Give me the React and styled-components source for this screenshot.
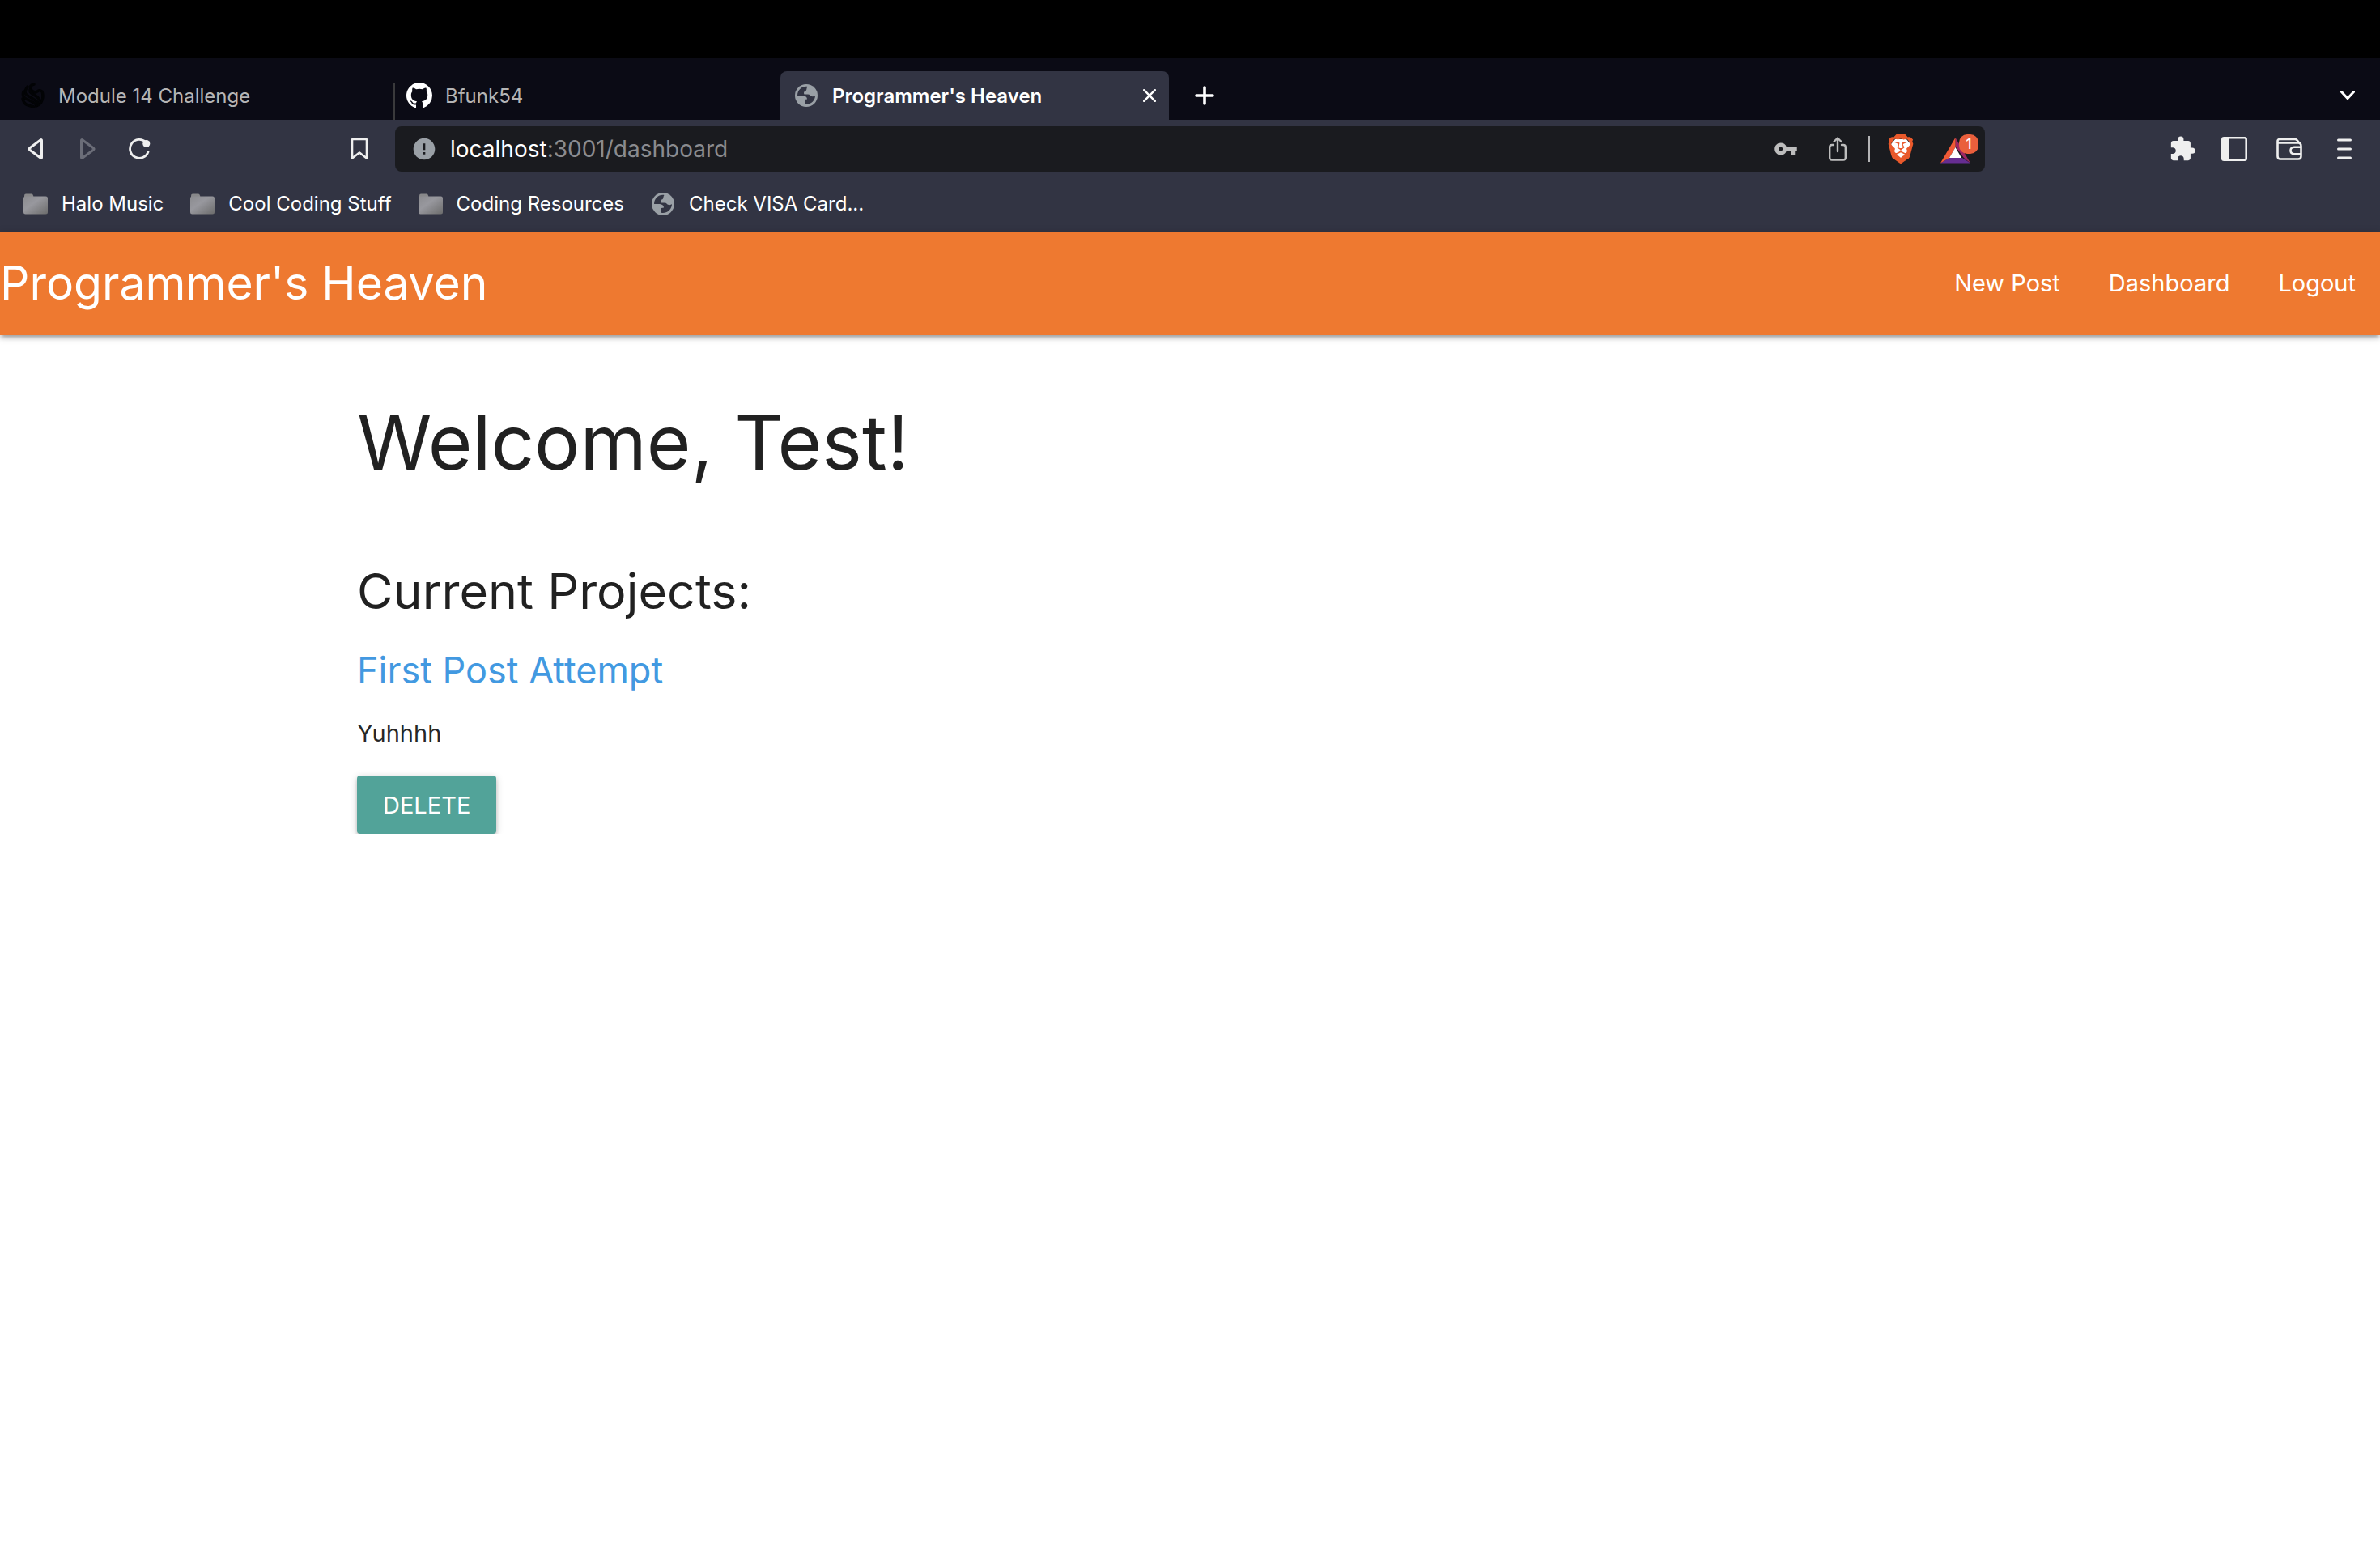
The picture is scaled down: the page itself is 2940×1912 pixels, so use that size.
import React from "react";
import styled, { createGlobalStyle } from "styled-components";
import { MdVpnKey, MdExtension, MdError } from "react-icons/md";
import { SiBrave } from "react-icons/si";

const Global = createGlobalStyle`
  * { box-sizing: border-box; }
  body {
    margin: 0;
    background: #fff;
    color: rgba(0, 0, 0, 0.87);
    font-family: Inter, Roboto, "Liberation Sans", sans-serif;
  }
  button, input { font: inherit; }
  svg { display: block; flex: none; }
`;

const ScreenEdge = styled.div`
  height: 72px;
  background: #000;
`;

const TabStrip = styled.div`
  display: flex;
  align-items: flex-end;
  height: 76px;
  padding: 0 8px;
  background: #0b0b15;
`;

const Tab = styled.div`
  display: flex;
  align-items: center;
  gap: 16px;
  width: ${(p) => (p.$active ? 480 : 478)}px;
  height: ${(p) => (p.$active ? 60 : 46)}px;
  padding: 0 ${(p) => (p.$active ? 8 : 16)}px 0 ${(p) => (p.$divided ? 14 : 16)}px;
  border-left: ${(p) => (p.$divided ? "2px solid #3a3a3c" : "none")};
  border-radius: ${(p) => (p.$active ? "8px 8px 0 0" : "0")};
  background: ${(p) => (p.$active ? "#323443" : "transparent")};
`;

const TabBody = styled.button`
  display: flex;
  align-items: center;
  gap: 16px;
  flex: 1;
  height: ${(p) => (p.$active ? 60 : 46)}px;
  padding: 0 0 ${(p) => (p.$active ? 0 : 14)}px;
  border: 0;
  background: none;
  color: ${(p) => (p.$active ? "#fff" : "#b5b5b5")};
  font-size: 24px;
  font-weight: ${(p) => (p.$active ? 600 : 400)};
  white-space: nowrap;
`;

const IconSlot = styled.span`
  display: flex;
  align-items: center;
  justify-content: center;
  width: 32px;
  height: 32px;
`;

const IconButton = styled.button`
  display: flex;
  align-items: center;
  justify-content: ${(p) => p.$align || "center"};
  width: ${(p) => p.$width || 64}px;
  height: ${(p) => (p.$tall ? 60 : 56)}px;
  padding: 0;
  border: 0;
  background: none;
  color: ${(p) => p.$color || "#efefef"};
`;

const Spacer = styled.div`
  flex: 1;
`;

const Toolbar = styled.div`
  display: grid;
  grid-template-columns: 488px 1fr 488px;
  align-items: center;
  height: 72px;
  background: #323443;
`;

const ToolGroup = styled.div`
  display: flex;
  align-items: center;
  justify-content: ${(p) => (p.$end ? "flex-end" : "flex-start")};
  padding: 0 12px;
`;

const AddressBar = styled.div`
  display: flex;
  align-items: center;
  height: 56px;
  padding: 0 8px 0 16px;
  border-radius: 8px;
  background: #1a1b1f;
`;

const Address = styled.a`
  flex: 1;
  padding-left: 12px;
  color: #8a8b8f;
  font-size: 28px;
  line-height: 36px;
  text-decoration: none;
`;

const Host = styled.span`
  color: #fff;
`;

const Rule = styled.span`
  width: 2px;
  height: 32px;
  margin: 0 6px;
  background: #b4b4b6;
`;

const Bookmarks = styled.nav`
  display: flex;
  align-items: center;
  gap: 32px;
  height: 66px;
  padding: 0 28px 2px;
  background: #323443;
`;

const Bookmark = styled.a`
  display: flex;
  align-items: center;
  gap: 16px;
  color: #fff;
  font-size: 24px;
  line-height: 32px;
  text-decoration: none;
  white-space: nowrap;
`;

const Navbar = styled.header`
  position: relative;
  display: flex;
  align-items: center;
  justify-content: space-between;
  height: 128px;
  background: #ee7930;
  box-shadow: 0 4px 4px rgba(0, 0, 0, 0.14), 0 6px 2px -4px rgba(0, 0, 0, 0.12),
    0 2px 10px rgba(0, 0, 0, 0.2);
`;

const Brand = styled.a`
  color: #fff;
  font-size: 57px;
  line-height: 128px;
  text-decoration: none;
`;

const NavLinks = styled.nav`
  display: flex;
`;

const NavLink = styled.a`
  padding: 0 30px;
  color: #fff;
  font-size: 29px;
  line-height: 128px;
  text-decoration: none;
`;

const Content = styled.main`
  width: 70%;
  margin: 0 auto;
  padding-top: 72px;
`;

const Welcome = styled.h1`
  margin: 0;
  font-size: 94px;
  font-weight: 400;
  line-height: 120px;
`;

const Section = styled.h2`
  margin: 86px 0 0;
  font-size: 61px;
  font-weight: 400;
  line-height: 76px;
`;

const PostTitle = styled.h3`
  margin: 32px 0 0;
  font-size: 45px;
  font-weight: 400;
  line-height: 56px;
`;

const PostLink = styled.a`
  color: #4299e1;
  text-decoration: none;
`;

const PostText = styled.p`
  margin: 28px 0 0;
  font-size: 29px;
  line-height: 44px;
`;

const DeleteButton = styled.button`
  display: block;
  height: 72px;
  margin-top: 30px;
  padding: 0 32px;
  border: 0;
  border-radius: 4px;
  background: #52a399;
  color: #fff;
  font-size: 29px;
  text-transform: uppercase;
  box-shadow: 0 4px 4px rgba(0, 0, 0, 0.14), 0 6px 2px -4px rgba(0, 0, 0, 0.12),
    0 2px 10px rgba(0, 0, 0, 0.2);
`;

const PhoenixIcon = () => (
  <svg width="30" height="32" viewBox="0 0 30 32" fill="none" stroke="#020305" strokeWidth="3.4" strokeLinecap="round">
    <path d="M17 2C8 4 14 11 18 12C23 12 22 7 27 11C29 17 28 26 20 29" />
    <path d="M9 5C0 17 14 16 22 25" />
    <path d="M4 11C0 22 14 20 20 28" />
    <path d="M3 20C5 29 11 28 17 30" />
    <path d="M12 9C11 15 22 15 24 22" />
  </svg>
);

const GithubIcon = () => (
  <svg width="32" height="32" viewBox="0 0 16 16" fill="#fff">
    <path d="M8 0C3.58 0 0 3.58 0 8c0 3.54 2.29 6.53 5.47 7.59.4.07.55-.17.55-.38 0-.19-.01-.82-.01-1.49-2.01.37-2.53-.49-2.69-.94-.09-.23-.48-.94-.82-1.13-.28-.15-.68-.52-.01-.53.63-.01 1.08.58 1.23.82.72 1.21 1.87.87 2.33.66.07-.52.28-.87.51-1.07-1.78-.2-3.64-.89-3.64-3.95 0-.87.31-1.59.82-2.15-.08-.2-.36-1.02.08-2.12 0 0 .67-.21 2.2.82.64-.18 1.32-.27 2-.27.68 0 1.36.09 2 .27 1.53-1.04 2.2-.82 2.2-.82.44 1.1.16 1.92.08 2.12.51.56.82 1.27.82 2.15 0 3.07-1.87 3.75-3.65 3.95.29.25.54.73.54 1.48 0 1.07-.01 1.93-.01 2.2 0 .21.15.46.55.38A8.013 8.013 0 0016 8c0-4.42-3.58-8-8-8z" />
  </svg>
);

const GlobeIcon = () => (
  <svg width="28" height="28" viewBox="0 0 28 28">
    <circle cx="14" cy="14" r="14" fill="#9aa0a6" />
    <path
      fill="#323443"
      d="M15.500 3C9 2 3 7 3 14L10 14C13 14.200 15 16 15 18.500L12 19V24.800C19 26 25 20.500 25 14C24 15 22.500 15.500 21 15C18.500 14.500 18.500 12.500 16 12.500H11.500C10.500 11 11 9 12.500 8.500C15 8.200 14 4.500 15.500 3Z"
    />
  </svg>
);

const FolderIcon = () => (
  <svg width="30" height="26" viewBox="0 0 30 26">
    <defs>
      <linearGradient id="folder" x1="0" y1="0" x2="1" y2="1">
        <stop offset="0" stopColor="#8b8b8f" />
        <stop offset="0.4" stopColor="#98989e" />
        <stop offset="1" stopColor="#6c6c6c" />
      </linearGradient>
    </defs>
    <path d="M1 5V2.5Q1 .5 3 .5H10Q11.500 .5 12 2.500L12.500 5Z" fill="#88888a" />
    <rect y="3.500" width="30" height="22" rx="2.500" fill="url(#folder)" />
  </svg>
);

const TriangleIcon = ({ forward }) => (
  <svg width="20" height="28" viewBox="0 0 20 28" fill="none" stroke={forward ? "#6b6d78" : "#efefef"} strokeWidth="3" strokeLinejoin="round">
    <path d={forward ? "M2.500 3.500V24.500Q2.500 26 4 25L17.500 15Q18.500 14 17.500 13L4 3Q2.500 2 2.500 3.500Z" : "M17.500 3.500V24.500Q17.500 26 16 25L2.500 15Q1.500 14 2.500 13L16 3Q17.500 2 17.500 3.500Z"} />
  </svg>
);

const ReloadIcon = () => (
  <svg width="28" height="28" viewBox="0 0 28 28" fill="none" stroke="#efefef" strokeWidth="2.800" strokeLinecap="round">
    <path d="M22 5.500A11.500 11.500 0 1 0 25 17.500" />
    <circle cx="22.800" cy="7.500" r="4.500" fill="#efefef" stroke="none" />
  </svg>
);

const BookmarkIcon = () => (
  <svg width="22" height="28" viewBox="0 0 22 28" fill="none" stroke="#efefef" strokeWidth="2.600" strokeLinejoin="round">
    <path d="M2 2.500Q2 2 2.500 2H19.500Q20 2 20 2.500V25.500L11 18.500L2 25.500Z" />
  </svg>
);

const ShareIcon = () => (
  <svg width="22" height="30" viewBox="0 0 22 30" fill="none" stroke="#bdbdbd" strokeWidth="2.400" strokeLinecap="round" strokeLinejoin="round">
    <path d="M6 10H4Q1.200 10 1.200 13V26Q1.200 28.500 4 28.500H18Q20.800 28.500 20.800 26V13Q20.800 10 18 10H16" />
    <path d="M11 18V2M6.500 6L11 1.500L15.500 6" />
  </svg>
);

const BraveIcon = () => (
  <svg width="36" height="36" viewBox="0 0 36 36">
    <path fill="#fff" d="M11 6H25L30 12L27 24L18 31L9 24L6 12Z" />
    <SiBrave size={36} color="#e9592b" />
  </svg>
);

const RewardsIcon = () => (
  <svg width="48" height="36" viewBox="0 0 48 36">
    <path d="M19.500 4L38 35.500L30 29L19.500 15Z" fill="#9e2763" />
    <path d="M1 35.500H38L28 29H12Z" fill="#662d91" />
    <path d="M19.500 4L1 35.500L12 29L19.500 16Z" fill="#f15a36" />
    <path d="M19.500 16L27 29H12Z" fill="#fff" />
    <rect x="24" width="24" height="24" rx="10" fill="#ea5f3c" />
    <text x="36" y="18" textAnchor="middle" fill="#fff" fontSize="17" fontWeight="500">1</text>
  </svg>
);

const SidebarIcon = () => (
  <svg width="32" height="30" viewBox="0 0 32 30">
    <rect x="1.300" y="1.300" width="29.400" height="27.400" rx="2" fill="none" stroke="#efefef" strokeWidth="2.600" />
    <rect x="1" y="1" width="9" height="28" fill="#efefef" />
  </svg>
);

const WalletIcon = () => (
  <svg width="32" height="28" viewBox="0 0 32 28" fill="none" stroke="#efefef" strokeWidth="2.600" strokeLinejoin="round">
    <path d="M1.500 5V23Q1.500 26.500 5 26.500H27Q30.500 26.500 30.500 23V10.500Q30.500 6.500 27 6.500H3.500Q1.500 6.500 1.500 4.500Q1.500 2 4 2H23Q25.500 2 28 6.500" />
    <path d="M30.500 11.800H22Q17.500 12 17.500 16Q17.500 20 22 20.200H30.500" />
  </svg>
);

const MenuIcon = () => (
  <svg width="18" height="28" viewBox="0 0 18 28" stroke="#efefef" strokeWidth="3" strokeLinecap="round">
    <path d="M1.500 3H16.500M1.500 14H16.500M1.500 25H16.500" />
  </svg>
);

const CloseIcon = () => (
  <svg width="16" height="16" viewBox="0 0 16 16" stroke="#fff" strokeWidth="2.400" strokeLinecap="round">
    <path d="M1.200 1.200L14.800 14.800M14.800 1.200L1.200 14.800" />
  </svg>
);

const PlusIcon = () => (
  <svg width="24" height="24" viewBox="0 0 24 24" stroke="#fff" strokeWidth="3.600" strokeLinecap="round">
    <path d="M12 2V22M2 12H22" />
  </svg>
);

const ChevronIcon = () => (
  <svg width="18" height="12" viewBox="0 0 18 12" fill="none" stroke="#fff" strokeWidth="3" strokeLinecap="round">
    <path d="M1.500 1.500L9 9.500L16.500 1.500" />
  </svg>
);

const tabs = [
  { title: "Module 14 Challenge", icon: <PhoenixIcon /> },
  { title: "Bfunk54", icon: <GithubIcon />, divided: true },
  { title: "Programmer's Heaven", icon: <GlobeIcon />, active: true },
];

const bookmarks = [
  { title: "Halo Music", icon: <FolderIcon /> },
  { title: "Cool Coding Stuff", icon: <FolderIcon /> },
  { title: "Coding Resources", icon: <FolderIcon /> },
  { title: "Check VISA Card...", icon: <GlobeIcon /> },
];

export default function App() {
  return (
    <>
      <Global />
      <ScreenEdge />
      <TabStrip>
        {tabs.map((t) => (
          <Tab key={t.title} $active={t.active} $divided={t.divided}>
            <TabBody type="button" $active={t.active}>
              <IconSlot>{t.icon}</IconSlot>
              {t.title}
            </TabBody>
            {t.active && (
              <IconButton type="button" $width={32} aria-label="Close tab">
                <CloseIcon />
              </IconButton>
            )}
          </Tab>
        ))}
        <IconButton type="button" $tall $width={88} aria-label="New tab">
          <PlusIcon />
        </IconButton>
        <Spacer />
        <IconButton type="button" $tall aria-label="Search tabs">
          <ChevronIcon />
        </IconButton>
      </TabStrip>
      <Toolbar>
        <ToolGroup>
          <IconButton type="button" aria-label="Back"><TriangleIcon /></IconButton>
          <IconButton type="button" aria-label="Forward"><TriangleIcon forward /></IconButton>
          <IconButton type="button" aria-label="Reload"><ReloadIcon /></IconButton>
          <Spacer />
          <IconButton type="button" aria-label="Bookmark this page"><BookmarkIcon /></IconButton>
        </ToolGroup>
        <AddressBar>
          <IconButton type="button" $width={40} $color="#9aa0a6" aria-label="Site information">
            <MdError size={32} />
          </IconButton>
          <Address href="#dashboard">
            <Host>localhost</Host>:3001/dashboard
          </Address>
          <IconButton type="button" $color="#bdbdbd" aria-label="Passwords"><MdVpnKey size={30} /></IconButton>
          <IconButton type="button" aria-label="Share"><ShareIcon /></IconButton>
          <Rule />
          <IconButton type="button" aria-label="Brave Shields"><BraveIcon /></IconButton>
          <IconButton type="button" $align="flex-end" aria-label="Brave Rewards"><RewardsIcon /></IconButton>
        </AddressBar>
        <ToolGroup $end>
          <IconButton type="button" aria-label="Extensions"><MdExtension size={34} /></IconButton>
          <IconButton type="button" aria-label="Sidebar"><SidebarIcon /></IconButton>
          <IconButton type="button" $width={72} aria-label="Wallet"><WalletIcon /></IconButton>
          <IconButton type="button" aria-label="Menu"><MenuIcon /></IconButton>
        </ToolGroup>
      </Toolbar>
      <Bookmarks>
        {bookmarks.map((b) => (
          <Bookmark key={b.title} href="#bookmark">
            <IconSlot>{b.icon}</IconSlot>
            {b.title}
          </Bookmark>
        ))}
      </Bookmarks>
      <Navbar>
        <Brand href="#home">Programmer's Heaven</Brand>
        <NavLinks>
          <NavLink href="#new">New Post</NavLink>
          <NavLink href="#dashboard">Dashboard</NavLink>
          <NavLink href="#logout">Logout</NavLink>
        </NavLinks>
      </Navbar>
      <Content>
        <Welcome>Welcome, Test!</Welcome>
        <Section>Current Projects:</Section>
        <PostTitle>
          <PostLink href="#post">First Post Attempt</PostLink>
        </PostTitle>
        <PostText>Yuhhhh</PostText>
        <DeleteButton type="button">Delete</DeleteButton>
      </Content>
    </>
  );
}
